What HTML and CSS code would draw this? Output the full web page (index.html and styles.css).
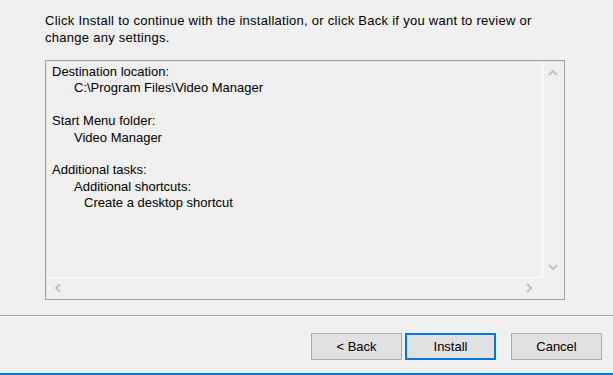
FILE: index.html
```html
<!DOCTYPE html>
<html lang="en">
<head>
    <meta charset="UTF-8">
    <title>Ready to Install</title>
    <link rel="stylesheet" href="styles.css">
</head>
<body>
    <div class="window">
        <div class="content">
            <p class="intro">Click Install to continue with the installation, or click Back if you want to review or<br>change any settings.</p>

            <div class="memo">
                <div class="memo-main">
                    <div class="memo-text">
                        <div class="line">Destination location:</div>
                        <div class="line indent-1">C:\Program Files\Video Manager</div>
                        <div class="line blank"></div>
                        <div class="line">Start Menu folder:</div>
                        <div class="line indent-1">Video Manager</div>
                        <div class="line blank"></div>
                        <div class="line">Additional tasks:</div>
                        <div class="line indent-1">Additional shortcuts:</div>
                        <div class="line indent-2">Create a desktop shortcut</div>
                    </div>
                    <div class="vscroll">
                        <span class="arrow">
                            <svg width="10" height="7" viewBox="0 0 10 7"><path d="M1 6 L5 2 L9 6" fill="none" stroke="#c2c2c2" stroke-width="2"/></svg>
                        </span>
                        <span class="arrow">
                            <svg width="10" height="7" viewBox="0 0 10 7"><path d="M1 1 L5 5 L9 1" fill="none" stroke="#c2c2c2" stroke-width="2"/></svg>
                        </span>
                    </div>
                </div>
                <div class="hscroll">
                    <span class="arrow">
                        <svg width="7" height="10" viewBox="0 0 7 10"><path d="M6 1 L2 5 L6 9" fill="none" stroke="#c2c2c2" stroke-width="2"/></svg>
                    </span>
                    <span class="arrow">
                        <svg width="7" height="10" viewBox="0 0 7 10"><path d="M1 1 L5 5 L1 9" fill="none" stroke="#c2c2c2" stroke-width="2"/></svg>
                    </span>
                    <span class="corner"></span>
                </div>
            </div>
        </div>

        <div class="footer">
            <button class="btn">&lt; Back</button>
            <button class="btn default">Install</button>
            <button class="btn cancel">Cancel</button>
        </div>
    </div>
</body>
</html>
```

FILE: styles.css
```css
* {
    margin: 0;
    padding: 0;
    box-sizing: border-box;
}

body {
    font-family: 'Liberation Sans', Arial, sans-serif;
    font-size: 13px;
    color: #000;
    background-color: #f0f0f0;
}

.window {
    height: 375px;
    display: flex;
    flex-direction: column;
}

.content {
    padding: 12px 48px 0 45px;
}

.intro {
    line-height: 17px;
    letter-spacing: 0.27px;
    white-space: nowrap;
}

.memo {
    margin-top: 14px;
    height: 240px;
    border: 1px solid #a0a0a0;
    box-shadow: inset 1px 1px 0 #e6e6e6;
    display: flex;
    flex-direction: column;
    padding: 1px;
}

.memo-main {
    flex: 1;
    display: flex;
    min-height: 0;
}

.memo-text {
    flex: 1;
    padding: 2px 5px;
    line-height: 16.4px;
    white-space: nowrap;
    border-right: 1px solid #fff;
    border-bottom: 1px solid #fff;
}

.line.blank {
    height: 16.4px;
}

.indent-1 {
    padding-left: 22px;
}

.indent-2 {
    padding-left: 32px;
}

.vscroll {
    width: 20px;
    display: flex;
    flex-direction: column;
    justify-content: space-between;
}

.vscroll .arrow {
    height: 21px;
    display: flex;
    align-items: center;
    justify-content: center;
}

.hscroll {
    height: 20px;
    display: flex;
}

.hscroll .arrow {
    width: 21px;
    display: flex;
    align-items: center;
    justify-content: center;
}

.hscroll .arrow:nth-child(2) {
    margin-left: auto;
    margin-right: 3px;
}

.corner {
    width: 20px;
}

.footer {
    margin-top: auto;
    height: 60px;
    border-top: 1px solid #a0a0a0;
    border-bottom: 2px solid #0078d7;
    box-shadow: inset 0 1px 0 #fff;
    display: flex;
    justify-content: flex-end;
    align-items: flex-start;
    padding: 17px 11px 0 0;
    gap: 3px;
}

.btn {
    width: 91px;
    height: 27px;
    font-family: 'Liberation Sans', Arial, sans-serif;
    font-size: 13px;
    color: #000;
    background-color: #e1e1e1;
    border: 1px solid #adadad;
}

.btn.default {
    border: 2px solid #0078d7;
}

.btn.cancel {
    margin-left: 12px;
}
```
